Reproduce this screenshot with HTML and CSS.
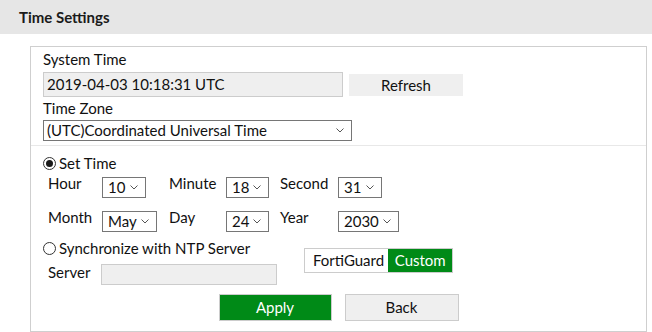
FILE: index.html
```html
<!DOCTYPE html>
<html>
<head>
<meta charset="utf-8">
<link rel="stylesheet" href="styles.css">
</head>
<body>
<div class="header">Time Settings</div>
<div class="panel">
  <div class="sec-top">
    <div class="label">System Time</div>
    <div class="row-sys">
      <div class="input sys-input">2019-04-03 10:18:31 UTC</div>
      <div class="btn-refresh">Refresh</div>
    </div>
    <div class="label tz-label">Time Zone</div>
    <div class="select tz-select"><span>(UTC)Coordinated Universal Time</span><svg class="chev" width="8" height="5" viewBox="0 0 8 5"><path d="M0.5 0.5 L4 4 L7.5 0.5" fill="none" stroke="#555" stroke-width="1"/></svg></div>
  </div>
  <div class="sec-bottom">
    <div class="radio-row"><span class="radio checked"></span>Set Time</div>
    <div class="grid">
      <div class="glabel">Hour</div>
      <div class="select s-hour"><span>10</span><svg class="chev" width="8" height="5" viewBox="0 0 8 5"><path d="M0.5 0.5 L4 4 L7.5 0.5" fill="none" stroke="#555" stroke-width="1"/></svg></div>
      <div class="glabel">Minute</div>
      <div class="select s-min"><span>18</span><svg class="chev" width="8" height="5" viewBox="0 0 8 5"><path d="M0.5 0.5 L4 4 L7.5 0.5" fill="none" stroke="#555" stroke-width="1"/></svg></div>
      <div class="glabel">Second</div>
      <div class="select s-sec"><span>31</span><svg class="chev" width="8" height="5" viewBox="0 0 8 5"><path d="M0.5 0.5 L4 4 L7.5 0.5" fill="none" stroke="#555" stroke-width="1"/></svg></div>
      <div class="glabel">Month</div>
      <div class="select s-month"><span>May</span><svg class="chev" width="8" height="5" viewBox="0 0 8 5"><path d="M0.5 0.5 L4 4 L7.5 0.5" fill="none" stroke="#555" stroke-width="1"/></svg></div>
      <div class="glabel">Day</div>
      <div class="select s-day"><span>24</span><svg class="chev" width="8" height="5" viewBox="0 0 8 5"><path d="M0.5 0.5 L4 4 L7.5 0.5" fill="none" stroke="#555" stroke-width="1"/></svg></div>
      <div class="glabel">Year</div>
      <div class="select s-year"><span>2030</span><svg class="chev" width="8" height="5" viewBox="0 0 8 5"><path d="M0.5 0.5 L4 4 L7.5 0.5" fill="none" stroke="#555" stroke-width="1"/></svg></div>
    </div>
    <div class="ntp">
      <div class="ntp-left">
        <div class="radio-row"><span class="radio"></span>Synchronize with NTP Server</div>
        <div class="server-row">
          <div class="glabel server-label">Server</div>
          <div class="input server-input"></div>
        </div>
      </div>
      <div class="toggle">
        <span class="opt">FortiGuard</span><span class="opt active">Custom</span>
      </div>
    </div>
    <div class="actions">
      <div class="btn btn-apply">Apply</div>
      <div class="btn btn-back">Back</div>
    </div>
  </div>
</div>
</body>
</html>
```
FILE: styles.css
```css
* { box-sizing: border-box; }
html, body { margin: 0; padding: 0; background: #fff; }
body {
  font-family: Lato, "Open Sans", sans-serif;
  font-size: 15px;
  color: #111;
  width: 652px;
  height: 332px;
  overflow: hidden;
}
.header {
  height: 34px;
  background: #e6e6e6;
  padding-left: 19px;
  line-height: 34px;
  font-weight: bold;
  font-size: 15px;
  color: #1a1a1a;
}
.panel {
  margin: 12px 5px 0 30px;
  border: 1px solid #cfcfcf;
  height: 286px;
}
.sec-top {
  padding: 4px 12px 4px 12px;
  border-bottom: 1px solid #e8e8e8;
}
.label {
  line-height: 17px;
  height: 17px;
  margin-bottom: 4px;
}
.tz-label { margin-bottom: 3px; margin-top: 3px; }
.row-sys {
  display: flex;
  align-items: center;
  gap: 6px;
}
.input {
  background: #efefef;
  border: 1px solid #cccccc;
}
.sys-input {
  width: 300px;
  height: 25px;
  line-height: 23px;
  padding-left: 3px;
}
.btn-refresh {
  width: 114px;
  height: 22px;
  line-height: 22px;
  background: #efefef;
  text-align: center;
}
.select {
  display: flex;
  align-items: center;
  border: 1px solid #767676;
  height: 21px;
  padding: 0 7px 0 5px;
  background: #fff;
}
.select span { flex: 1; line-height: 19px; white-space: nowrap; }
.chev { flex: none; }
.tz-select { width: 309px; padding-left: 3px; }
.sec-bottom {
  padding: 9px 12px 0 12px;
}
.radio-row {
  display: flex;
  align-items: center;
  line-height: 17px;
  height: 17px;
}
.radio {
  width: 13px;
  height: 13px;
  border: 1px solid #333;
  border-radius: 50%;
  margin-right: 3px;
  display: inline-flex;
  align-items: center;
  justify-content: center;
  background: #fff;
}
.radio.checked::after {
  content: "";
  width: 7px;
  height: 7px;
  border-radius: 50%;
  background: #1a1a1a;
}
.grid {
  display: grid;
  grid-template-columns: 54px 67px 57px 54px 58px auto;
  row-gap: 11px;
  padding-left: 5px;
  margin-top: 3px;
  align-items: start;
}
.glabel {
  line-height: 17px;
}
.grid .select { margin-top: 2px; justify-self: start; }
.s-hour { width: 44px; }
.s-min { width: 43px; }
.s-sec { width: 44px; }
.s-month { width: 55px; }
.s-day { width: 43px; }
.s-year { width: 61px; }
.ntp {
  display: flex;
  align-items: center;
  margin-top: 8px;
  gap: 27px;
}
.server-row {
  display: flex;
  align-items: flex-start;
  padding-left: 5px;
  margin-top: 7px;
}
.server-label { width: 53px; }
.server-input {
  width: 176px;
  height: 21px;
}
.toggle {
  display: flex;
  border: 1px solid #cccccc;
  height: 25px;
  width: 149px;
  margin-top: -4px;
}
.opt {
  line-height: 23px;
  padding: 0 0 0 8px;
  background: #fff;
  width: 84px;
  white-space: nowrap;
}
.opt.active {
  background: #008a17;
  color: #fff;
  width: 64px;
  padding: 0;
  text-align: center;
}
.actions {
  display: flex;
  justify-content: center;
  gap: 13px;
  margin-top: 9px;
}
.btn {
  width: 114px;
  height: 27px;
  line-height: 25px;
  text-align: center;
  border: 1px solid #cccccc;
  font-size: 15px;
}
.btn-apply {
  background: #008a17;
  color: #fff;
  width: 113px;
}
.btn-back {
  background: #efefef;
}
```
